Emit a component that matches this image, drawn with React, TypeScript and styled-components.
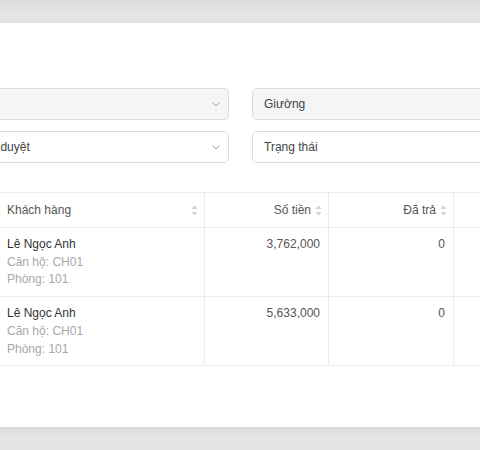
import styled, { createGlobalStyle } from "styled-components";

const GlobalStyle = createGlobalStyle`
  html, body {
    margin: 0;
    padding: 0;
  }
  body {
    font-family: "Liberation Sans", Arial, sans-serif;
    background: #e5e5e5;
  }
`;

const invoices = [
  { id: 1, name: "Lê Ngọc Anh", apartment: "CH01", room: "101", amount: "3,762,000", paid: "0" },
  { id: 2, name: "Lê Ngọc Anh", apartment: "CH01", room: "101", amount: "5,633,000", paid: "0" },
];

const Chevron = () => (
  <svg width="8" height="5" viewBox="0 0 8 5" fill="none">
    <path d="M0.8 0.8L4 4L7.2 0.8" stroke="#9a9a9a" strokeWidth="1" strokeLinecap="round" strokeLinejoin="round" />
  </svg>
);

const Sorter = () => (
  <SorterIcon viewBox="0 0 7 11">
    <path d="M3.5 0.5L6.5 4H0.5Z" fill="#d2d2d8" />
    <path d="M3.5 10.5L6.5 7H0.5Z" fill="#d2d2d8" />
  </SorterIcon>
);

const App = () => {
  return (
    <Overlay>
      <GlobalStyle />
      <Modal>
        <FilterGrid>
          <Select $disabled>
            <span />
            <Chevron />
          </Select>
          <Select $disabled>
            <span>Giường</span>
          </Select>
          <Select>
            <span>Chưa duyệt</span>
            <Chevron />
          </Select>
          <Select>
            <span>Trạng thái</span>
          </Select>
        </FilterGrid>

        <Table>
          <colgroup>
            <col style={{ width: 44 }} />
            <col style={{ width: 206 }} />
            <col style={{ width: 124 }} />
            <col style={{ width: 125 }} />
            <col style={{ width: 150 }} />
          </colgroup>
          <thead>
            <tr>
              <Th />
              <Th>
                <HeadInner>
                  <span>Khách hàng</span>
                  <Sorter />
                </HeadInner>
              </Th>
              <Th>
                <HeadInner $right>
                  <span>Số tiền</span>
                  <Sorter />
                </HeadInner>
              </Th>
              <Th>
                <HeadInner $right>
                  <span>Đã trả</span>
                  <Sorter />
                </HeadInner>
              </Th>
              <Th />
            </tr>
          </thead>
          <tbody>
            {invoices.map((row) => (
              <tr key={row.id}>
                <Td />
                <Td>
                  <Name>{row.name}</Name>
                  <Sub>Căn hộ: {row.apartment}</Sub>
                  <Sub>Phòng: {row.room}</Sub>
                </Td>
                <Td $right>{row.amount}</Td>
                <Td $right>{row.paid}</Td>
                <Td />
              </tr>
            ))}
          </tbody>
        </Table>
      </Modal>
    </Overlay>
  );
};

const Overlay = styled.div`
  width: 480px;
  height: 450px;
  overflow: hidden;
  padding-top: 23px;
  box-sizing: border-box;
  background: linear-gradient(#dcdcdc 0px, #e4e4e4 14px, #e4e4e4 100%);
`;

const Modal = styled.div`
  margin-left: -69px;
  width: 760px;
  height: 404px;
  box-sizing: border-box;
  padding: 65px 24px 0;
  background: #fff;
  box-shadow: 0 3px 8px rgba(0, 0, 0, 0.06);
`;

const FilterGrid = styled.div`
  display: grid;
  grid-template-columns: 274px 274px;
  column-gap: 23px;
  row-gap: 11px;
`;

const Select = styled.div<{ $disabled?: boolean }>`
  height: 32px;
  box-sizing: border-box;
  display: flex;
  align-items: center;
  justify-content: space-between;
  padding: 0 8px 0 11px;
  border: 1px solid #dcdcdc;
  border-radius: 5px;
  background: ${(p) => (p.$disabled ? "#f5f5f5" : "#fff")};
  font-size: 12px;
  color: #444;
`;

const Table = styled.table`
  margin-top: 29px;
  border-collapse: separate;
  border-spacing: 0;
  table-layout: fixed;
  width: 649px;
  border-top: 1px solid #ebebf0;
  font-size: 12px;
`;

const Th = styled.th`
  height: 18px;
  padding: 8px 6px 8px 8px;
  line-height: 18px;
  font-weight: 400;
  text-align: left;
  color: #555;
  border-right: 1px solid #ebebf0;
  border-bottom: 1px solid #ebebf0;
`;

const HeadInner = styled.div<{ $right?: boolean }>`
  display: flex;
  align-items: center;
  justify-content: ${(p) => (p.$right ? "flex-end" : "space-between")};
  gap: 4px;
`;

const SorterIcon = styled.svg`
  width: 7px;
  height: 11px;
  flex-shrink: 0;
`;

const Td = styled.td<{ $right?: boolean }>`
  padding: 8px 8px 7px;
  line-height: 17.7px;
  vertical-align: top;
  text-align: ${(p) => (p.$right ? "right" : "left")};
  color: #555;
  border-right: 1px solid #ebebf0;
  border-bottom: 1px solid #ebebf0;
`;

const Name = styled.div`
  color: #333;
`;

const Sub = styled.div`
  color: #a8a8a8;
`;

export default App;
